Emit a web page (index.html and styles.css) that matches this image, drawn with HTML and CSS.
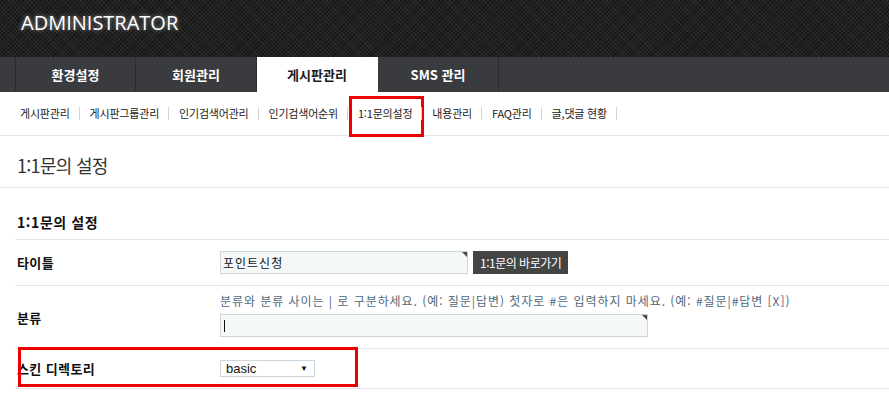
FILE: index.html
```html
<!DOCTYPE html>
<html lang="ko">
<head>
    <meta charset="UTF-8">
    <title>ADMINISTRATOR</title>
    <link rel="stylesheet" href="styles.css">
</head>
<body>
    <div class="header">
        <h1 class="logo">ADMINISTRATOR</h1>
    </div>
    <ul class="gnb">
        <li>환경설정</li>
        <li>회원관리</li>
        <li class="on">게시판관리</li>
        <li>SMS 관리</li>
    </ul>
    <ul class="lnb">
        <li>게시판관리</li>
        <li>게시판그룹관리</li>
        <li>인기검색어관리</li>
        <li>인기검색어순위</li>
        <li class="on">1:1문의설정</li>
        <li>내용관리</li>
        <li>FAQ관리</li>
        <li>글,댓글 현황</li>
    </ul>

    <h2 class="page-title">1:1문의 설정</h2>

    <div class="content">
        <h3 class="section-title">1:1문의 설정</h3>
        <table class="form-table">
            <tr>
                <th>타이틀</th>
                <td>
                    <div class="field-row">
                        <span class="field"><input type="text" class="input w248" value="포인트신청"></span>
                        <button class="btn">1:1문의 바로가기</button>
                    </div>
                </td>
            </tr>
            <tr>
                <th>분류</th>
                <td>
                    <p class="help">분류와 분류 사이는 | 로 구분하세요. (예: 질문|답변) 첫자로 #은 입력하지 마세요. (예: #질문|#답변 [X])</p>
                    <div class="field-row">
                        <span class="field"><input type="text" class="input w428" value=""><span class="caret"></span></span>
                    </div>
                </td>
            </tr>
            <tr>
                <th class="marked">스킨 디렉토리</th>
                <td>
                    <div class="select">basic <span class="arrow">&#9660;</span></div>
                </td>
            </tr>
        </table>
    </div>
</body>
</html>
```

FILE: styles.css
```css
body {
    margin: 0;
    font-family: "Noto Sans CJK KR", "Noto Sans", sans-serif;
    font-size: 12px;
    color: #222;
    background: #fff;
}
ul {
    list-style: none;
    margin: 0;
    padding: 0;
}
.header {
    height: 57px;
    padding-left: 21px;
    background-color: #202020;
    background-image:
        repeating-linear-gradient(45deg, rgba(255, 255, 255, 0.05) 0 1px, transparent 1px 3px),
        repeating-linear-gradient(-45deg, rgba(0, 0, 0, 0.35) 0 1px, transparent 1px 3px);
    box-sizing: border-box;
}
.logo {
    margin: 0;
    padding-top: 9px;
    font-family: "Open Sans", sans-serif;
    font-weight: 400;
    font-size: 20px;
    letter-spacing: 0;
    line-height: 28px;
    color: #fff;
    text-shadow: 0 0 4px rgba(255, 255, 255, 0.55);
}
.gnb {
    display: flex;
    height: 35px;
    padding-left: 15px;
    background: #3a3b3f;
}
.gnb li {
    width: 120px;
    border-right: 1px solid #2c2d30;
    text-align: center;
    line-height: 35px;
    font-size: 13px;
    font-weight: bold;
    color: #fff;
}
.gnb li:first-child {
    border-left: 1px solid #2c2d30;
    width: 119px;
}
.gnb li.on {
    background: #fff;
    color: #1a1a1a;
    border-right-color: #fff;
}
.lnb {
    display: flex;
    align-items: center;
    height: 43px;
    padding-left: 10px;
    border-bottom: 1px solid #e6e6e6;
}
.lnb li {
    position: relative;
    padding: 0 10px;
    font-size: 11px;
    letter-spacing: -0.2px;
    line-height: 43px;
    color: #222;
}
.lnb li::after {
    content: "";
    position: absolute;
    right: 0;
    top: 15px;
    height: 13px;
    border-right: 1px solid #d4d4d4;
}
.lnb li.on::before {
    content: "";
    position: absolute;
    left: 1px;
    right: -2px;
    top: 4px;
    bottom: -2px;
    border: 3px solid #ec0000;
}
.page-title {
    margin: 0;
    height: 51px;
    padding: 0 0 0 17px;
    border-bottom: 1px solid #e6e6e6;
    font-size: 18px;
    font-weight: normal;
    letter-spacing: -0.7px;
    line-height: 58px;
    color: #333;
}
.content {
    padding-left: 15px;
}
.section-title {
    margin: 0;
    height: 51px;
    padding-left: 2px;
    border-bottom: 1px solid #e6e6e6;
    font-size: 14px;
    letter-spacing: 0.6px;
    line-height: 68px;
    color: #111;
}
.form-table {
    width: 100%;
    border-collapse: collapse;
}
.form-table th,
.form-table td {
    border-bottom: 1px solid #e6e6e6;
    padding: 11px 0;
    vertical-align: middle;
}
.form-table th {
    width: 203px;
    padding-left: 2px;
    text-align: left;
    font-size: 13px;
    letter-spacing: 0.4px;
    line-height: 17px;
    color: #111;
}
.form-table th.marked {
    position: relative;
}
.form-table th.marked::after {
    content: "";
    position: absolute;
    left: 3px;
    top: -2px;
    width: 334px;
    height: 34px;
    border: 3px solid #ec0000;
}
.field-row {
    display: flex;
    align-items: center;
    gap: 5px;
}
.field {
    position: relative;
}
.field::after {
    content: "";
    position: absolute;
    top: 1px;
    right: 1px;
    border-top: 5px solid #4a4a42;
    border-left: 5px solid transparent;
}
.input {
    display: block;
    height: 23px;
    box-sizing: border-box;
    padding: 0 2px;
    border: 1px solid #ccd7db;
    background: #f4f8f9;
    font-family: inherit;
    font-size: 12px;
    letter-spacing: 1px;
    color: #111;
}
.w248 {
    width: 248px;
}
.w428 {
    width: 428px;
}
.caret {
    position: absolute;
    left: 4px;
    top: 6px;
    height: 12px;
    border-left: 1px solid #111;
}
.btn {
    height: 23px;
    padding: 0 7px;
    border: none;
    background: #444;
    color: #fff;
    font-family: inherit;
    font-size: 12px;
    letter-spacing: -0.5px;
}
.help {
    margin: -5px 0 4px;
    font-size: 12px;
    letter-spacing: 0.95px;
    line-height: 18px;
    color: #52697a;
}
.select {
    display: flex;
    justify-content: space-between;
    align-items: center;
    width: 95px;
    height: 17px;
    box-sizing: border-box;
    padding: 0 6px 0 5px;
    border: 1px solid #ccd7db;
    font-family: "Liberation Sans", sans-serif;
    font-size: 13px;
    color: #111;
}
.arrow {
    font-size: 8px;
}
```
